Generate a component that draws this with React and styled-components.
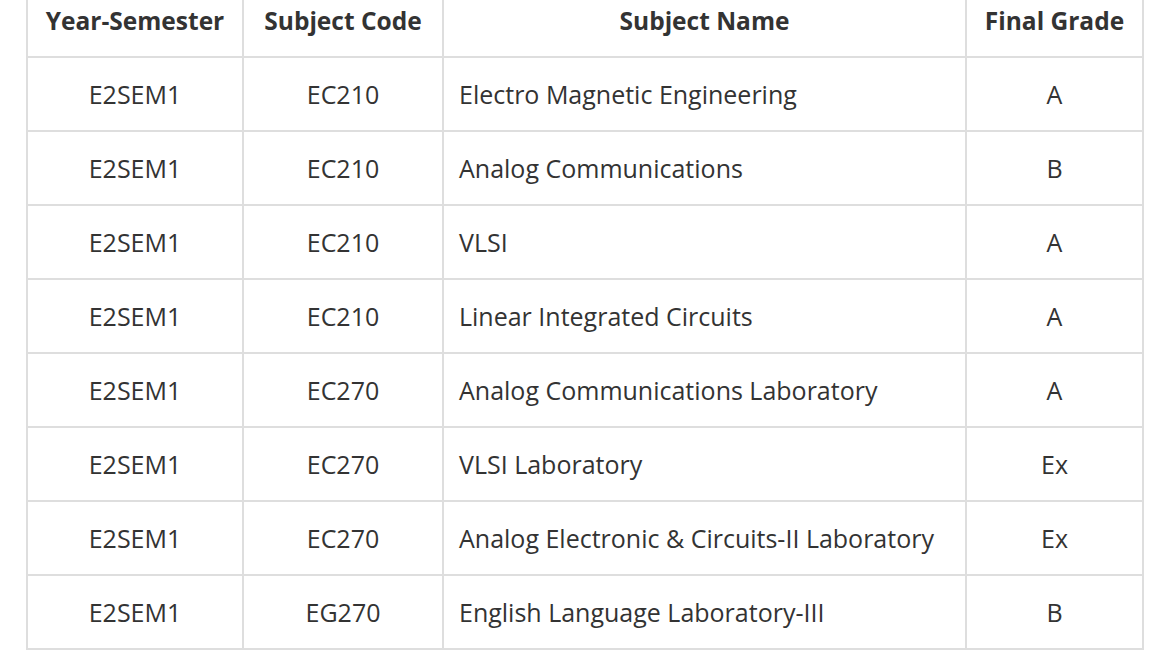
import React from 'react'
import styled, { createGlobalStyle } from 'styled-components'

const GlobalStyle = createGlobalStyle`
  body {
    margin: 0;
    background: #fff;
    font-family: "Open Sans", "Noto Sans", sans-serif;
    color: #333;
  }
`

const Wrapper = styled.div`
  padding: 0 0 0 26px;
  margin-top: -18px;
`

const Table = styled.table`
  border-collapse: separate;
  border-spacing: 0;
  border-left: 2px solid #dedede;
  border-top: 2px solid #dedede;
  table-layout: fixed;
  width: 1118px;
`

const Th = styled.th`
  box-sizing: border-box;
  height: 74px;
  padding: 0 10px;
  border-right: 2px solid #dedede;
  border-bottom: 2px solid #dedede;
  font-size: 24.5px;
  font-weight: 700;
  color: #333;
  text-align: center;
  vertical-align: middle;
  white-space: nowrap;
`

const Td = styled.td`
  box-sizing: border-box;
  height: 74px;
  padding: 0 15px;
  border-right: 2px solid #dedede;
  border-bottom: 2px solid #dedede;
  font-size: 25px;
  font-weight: 400;
  color: #333;
  text-align: ${props => (props.$left ? 'left' : 'center')};
  vertical-align: middle;
  white-space: nowrap;
`

const rows = [
  ['E2SEM1', 'EC210', 'Electro Magnetic Engineering', 'A'],
  ['E2SEM1', 'EC210', 'Analog Communications', 'B'],
  ['E2SEM1', 'EC210', 'VLSI', 'A'],
  ['E2SEM1', 'EC210', 'Linear Integrated Circuits', 'A'],
  ['E2SEM1', 'EC270', 'Analog Communications Laboratory', 'A'],
  ['E2SEM1', 'EC270', 'VLSI Laboratory', 'Ex'],
  ['E2SEM1', 'EC270', 'Analog Electronic & Circuits-II Laboratory', 'Ex'],
  ['E2SEM1', 'EG270', 'English Language Laboratory-III', 'B'],
]

export default function App() {
  return (
    <Wrapper>
      <GlobalStyle />
      <Table>
        <colgroup>
          <col style={{ width: 216 }} />
          <col style={{ width: 200 }} />
          <col style={{ width: 523 }} />
          <col style={{ width: 177 }} />
        </colgroup>
        <thead>
          <tr>
            <Th>Year-Semester</Th>
            <Th>Subject Code</Th>
            <Th>Subject Name</Th>
            <Th>Final Grade</Th>
          </tr>
        </thead>
        <tbody>
          {rows.map((r, i) => (
            <tr key={i}>
              <Td>{r[0]}</Td>
              <Td>{r[1]}</Td>
              <Td $left>{r[2]}</Td>
              <Td>{r[3]}</Td>
            </tr>
          ))}
        </tbody>
      </Table>
    </Wrapper>
  )
}
